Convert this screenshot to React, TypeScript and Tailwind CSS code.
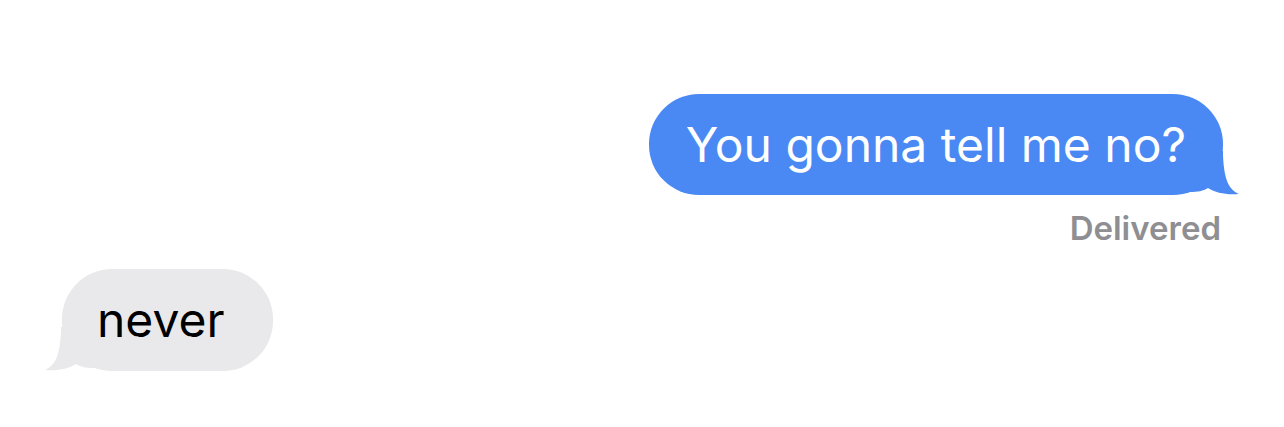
import React from 'react';

function TailRight({ color }: { color: string }) {
  return (
    <svg className="absolute -right-[17px] bottom-0" width="50" height="44" viewBox="0 0 50 44">
      <path d="M0 41 C8 41 13 40 18 37 C26 42 36 44 49 43 C40 39 34 31 33 4 L33 0 L0 0 Z" fill={color} />
    </svg>
  );
}

function TailLeft({ color }: { color: string }) {
  return (
    <svg className="absolute -left-[18px] bottom-0" width="50" height="44" viewBox="0 0 50 44">
      <path d="M50 41 C42 41 37 40 32 37 C24 42 14 44 1 43 C10 39 16 31 17 4 L17 0 L50 0 Z" fill={color} />
    </svg>
  );
}

export default function App() {
  return (
    <div className="w-[1284px] h-[427px] bg-white flex flex-col pt-[94px] font-['Inter','Liberation_Sans',sans-serif]">
      <div className="flex justify-end pr-[61px]">
        <div className="relative h-[101px] rounded-[50px] bg-[#4a89f3] pl-[37px] pr-[37px] flex items-center">
          <TailRight color="#4a89f3" />
          <span className="relative text-white text-[48px] leading-none">You gonna tell me no?</span>
        </div>
      </div>
      <div className="flex justify-end pr-[63px] mt-[17px]">
        <span className="text-[#8e8e93] text-[33px] font-semibold leading-none">Delivered</span>
      </div>
      <div className="flex pl-[62px] mt-[24px]">
        <div className="relative h-[102px] w-[211px] rounded-[50px] bg-[#e9e9eb] flex items-center pl-[35px]">
          <TailLeft color="#e9e9eb" />
          <span className="relative text-black text-[48px] leading-none">never</span>
        </div>
      </div>
    </div>
  );
}
